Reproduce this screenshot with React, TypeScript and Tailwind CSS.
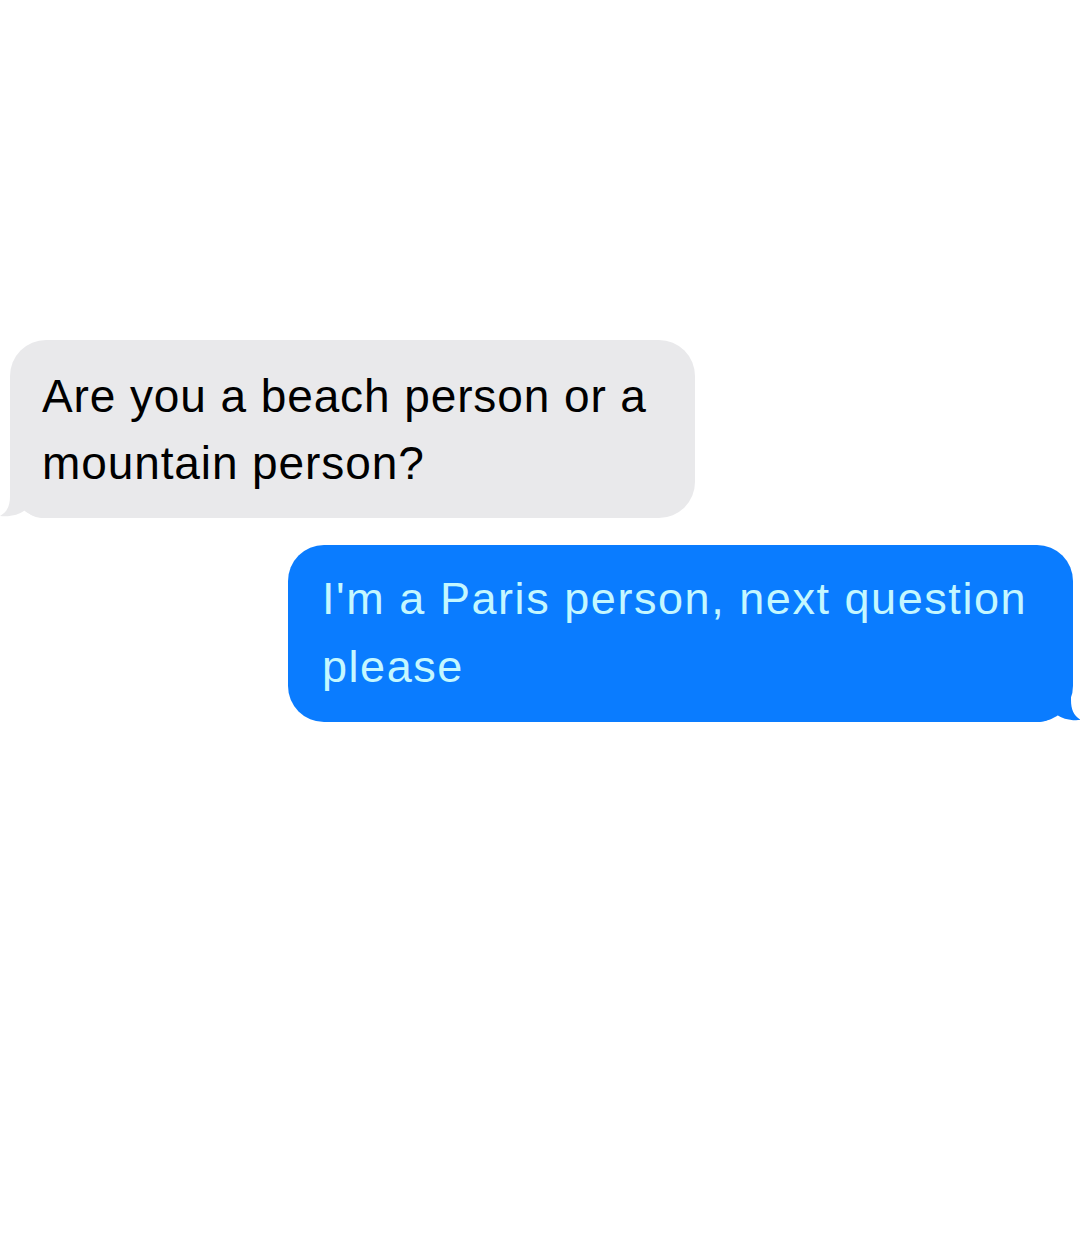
import React from "react";

const Tail = ({ color, flip }: { color: string; flip?: boolean }) => (
  <svg
    width="60"
    height="40"
    viewBox="0 0 60 40"
    className={`absolute bottom-0 ${flip ? "-right-[8px] -scale-x-100" : "-left-[10px]"}`}
  >
    <path
      d="M10 0 H60 V40 H44 C36 40 30 37.5 25 32 C19 37 10 39 0 38 C7 34 10 28 10 18 Z"
      fill={color}
    />
  </svg>
);

export default function App() {
  return (
    <div
      className="min-h-[1237px] w-[1080px] bg-white flex flex-col pt-[340px]"
      style={{ fontFamily: '"Liberation Sans", Arial, Helvetica, sans-serif' }}
    >
      {/* incoming */}
      <div className="relative ml-[10px] w-[685px] rounded-[36px] bg-[#e9e9eb] pl-[32px] pr-[20px] pt-[23px] pb-[21px]">
        <Tail color="#e9e9eb" />
        <p className="relative text-[46px] leading-[67px] tracking-[0.9px] text-black">
          Are you a beach person or a mountain person?
        </p>
      </div>

      {/* outgoing */}
      <div className="relative ml-[288px] mt-[27px] w-[785px] rounded-[36px] bg-[#0a7cff] pl-[34px] pr-[8px] pt-[20px] pb-[21px]">
        <Tail color="#0a7cff" flip />
        <p className="relative text-[45px] leading-[68px] tracking-[1.55px] text-[#c4f7ff]">
          I'm a Paris person, next question please
        </p>
      </div>
    </div>
  );
}
